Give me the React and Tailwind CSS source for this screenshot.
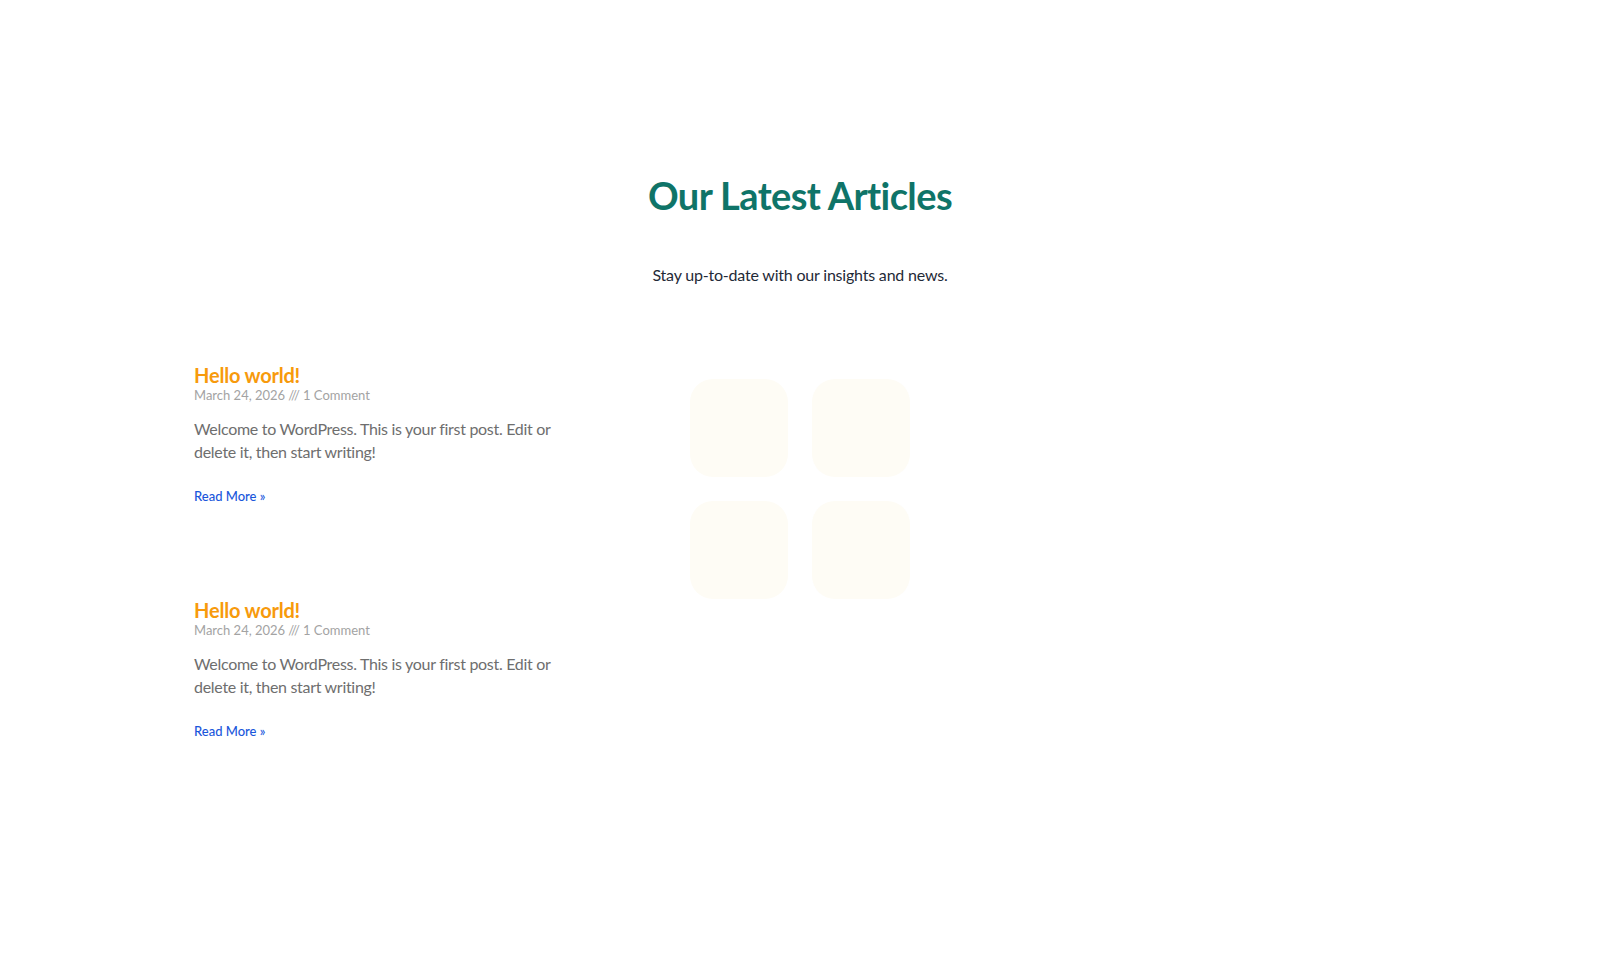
import React from 'react';

const posts = [1, 2];

function PostCard() {
  return (
    <article className="flex flex-col">
      <h3 className="text-[20px] leading-[24px] font-bold text-[#f79a0c] tracking-[-0.2px]">
        <a href="#">Hello world!</a>
      </h3>
      <div className="mt-[-1px] text-[13px] leading-[18px] text-[#a3a3a3]">
        <span>March 24, 2026</span>
        <span className="mx-[3px]">///</span>
        <span>1 Comment</span>
      </div>
      <p className="mt-[13px] text-[16px] leading-[23px] tracking-[-0.3px] text-[#6e6e6e]">
        Welcome to WordPress. This is your first post. Edit or delete it, then start writing!
      </p>
      <a href="#" className="mt-[24px] text-[13px] leading-[18px] font-medium text-[#1a56db]">
        Read More »
      </a>
    </article>
  );
}

function GridLoader() {
  return (
    <div className="absolute left-[690px] top-[379px] grid grid-cols-2 gap-[24px]">
      {[0, 1, 2, 3].map((i) => (
        <div key={i} className="w-[98px] h-[98px] rounded-[23px] bg-[#fefcf5]" />
      ))}
    </div>
  );
}

export default function App() {
  return (
    <div
      className="relative min-h-[978px] bg-white"
      style={{ fontFamily: 'Lato, "Noto Sans", sans-serif' }}
    >
      <section className="mx-auto w-[1212px] pt-[173px]">
        <h2 className="text-center text-[38px] leading-[44px] font-bold text-[#0f7468] tracking-[-0.6px]">
          Our Latest Articles
        </h2>
        <p className="mt-[46px] text-center text-[16px] leading-[24px] tracking-[-0.2px] text-[#1f2a37]">
          Stay up-to-date with our insights and news.
        </p>
        <div className="mt-[76px] grid grid-cols-3 gap-x-[30px] gap-y-[93px]">
          {posts.map((p) => (
            <div key={p} className="col-start-1">
              <PostCard />
            </div>
          ))}
        </div>
      </section>
      <GridLoader />
    </div>
  );
}
